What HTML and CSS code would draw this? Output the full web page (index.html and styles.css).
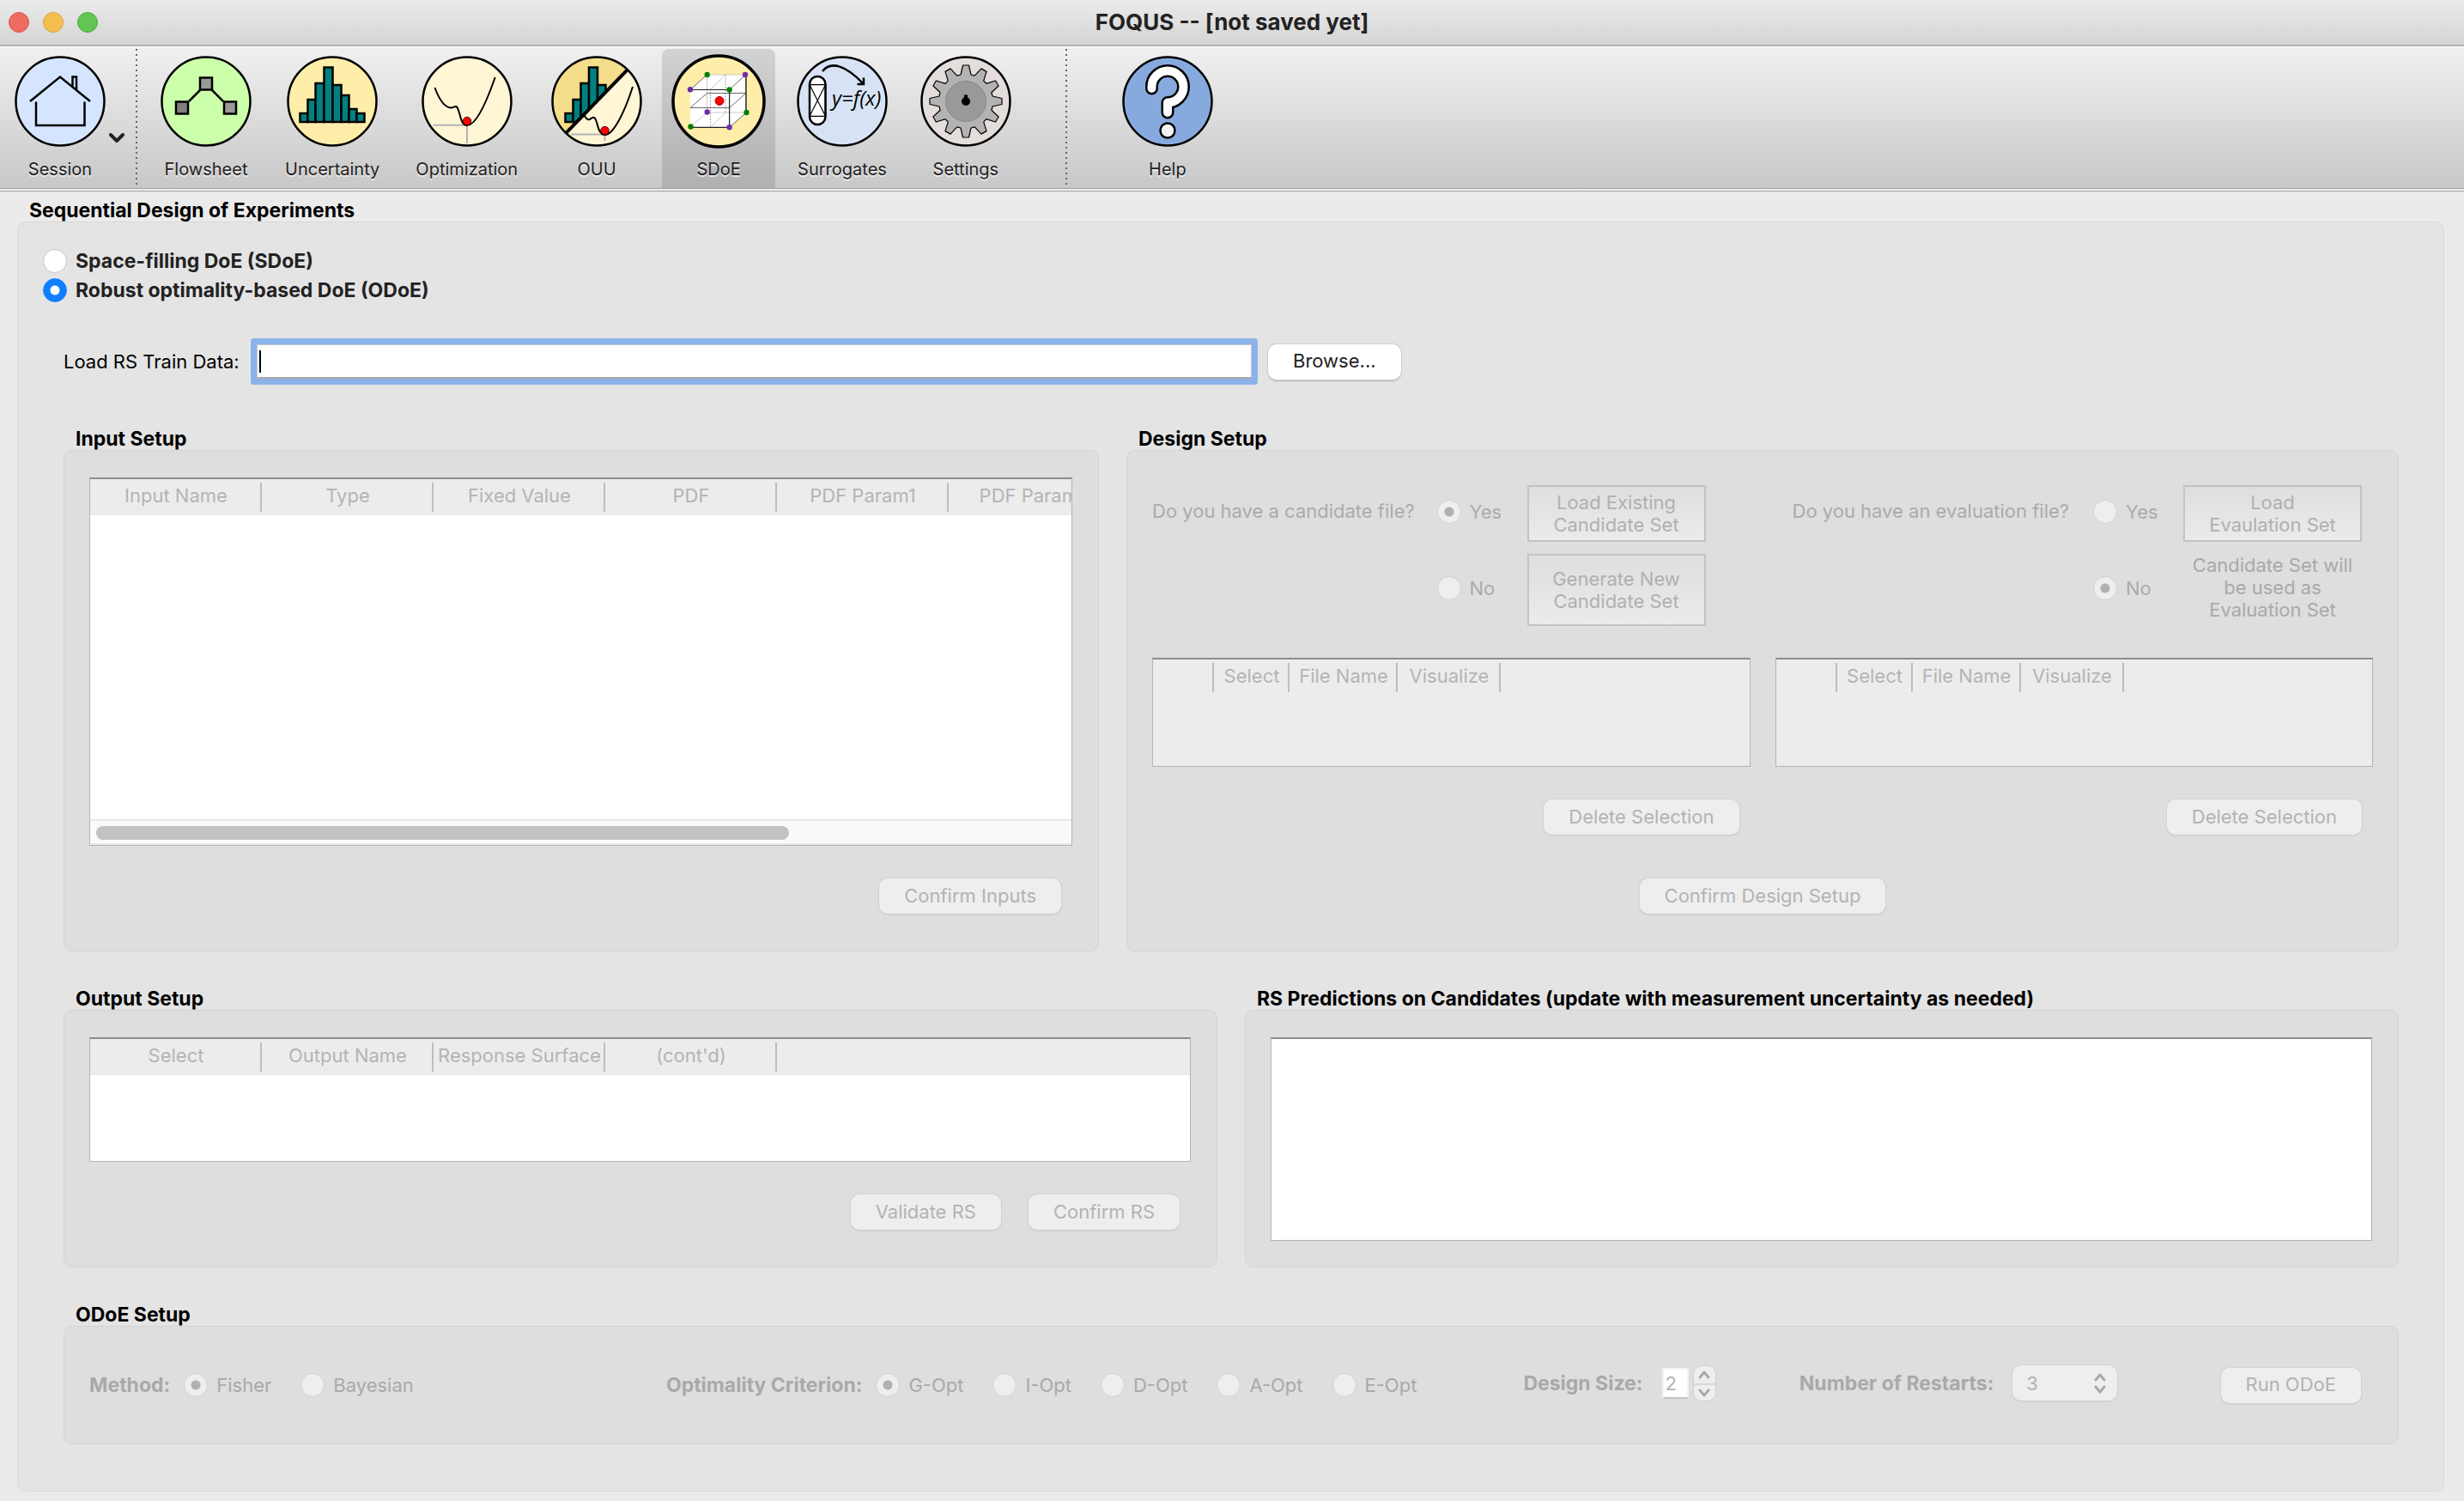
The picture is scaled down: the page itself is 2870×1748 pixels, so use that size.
FILE: index.html
```html
<!DOCTYPE html>
<html lang="en">
<head>
<meta charset="utf-8">
<title>FOQUS -- [not saved yet]</title>
<link rel="stylesheet" href="styles.css">
</head>
<body>
<header class="titlebar">
  <div class="lights">
    <button class="light close" aria-label="Close"></button>
    <button class="light minimize" aria-label="Minimize"></button>
    <button class="light zoom" aria-label="Zoom"></button>
  </div>
  <h1 class="window-title">FOQUS -- [not saved yet]</h1>
</header>

<nav class="toolbar">
  <button class="tool session">
    <svg class="tool-icon" viewBox="-2 -2 110 110">
      <circle class="disc" cx="53" cy="53" r="51.5" fill="#d5e5ff"/>
      <path class="ink" d="M67.5 36V24.500h4.500V40M18 53 53 24.500 88 53M25 53.500V81h56.500V53.500"/>
    </svg>
    <span>Session</span>
  </button>
  <svg class="chevron" viewBox="0 0 18 12"><path d="M2 2l7 7 7-7"/></svg>
  <i class="divider"></i>
  <button class="tool">
    <svg class="tool-icon" viewBox="-2 -2 110 110">
      <circle class="disc" cx="53" cy="53" r="51.5" fill="#ccffaa"/>
      <path class="ink" d="M46 40 33 53M60 40 73 53"/>
      <g class="ink"><rect x="46" y="25.500" width="14" height="14" fill="#999"/><rect x="18" y="53.500" width="14" height="14" fill="#808080"/><rect x="74" y="53.500" width="14" height="14" fill="#999"/></g>
    </svg>
    <span>Flowsheet</span>
  </button>
  <button class="tool">
    <svg class="tool-icon" viewBox="-2 -2 110 110">
      <circle class="disc" cx="53" cy="53" r="51.5" fill="#ffeeaa"/>
      <g class="ink bars"><rect x="15.500" y="67" width="9" height="10"/><rect x="24.500" y="51" width="9" height="26"/><rect x="33.500" y="32" width="10" height="45"/><rect x="43.500" y="13.500" width="10" height="63.500"/><rect x="53.500" y="34" width="10" height="43"/><rect x="63.500" y="46" width="9" height="31"/><rect x="72.500" y="62" width="9" height="15"/><rect x="81.500" y="67" width="9" height="10"/></g>
    </svg>
    <span>Uncertainty</span>
  </button>
  <button class="tool">
    <svg class="tool-icon" viewBox="-2 -2 110 110">
      <circle class="disc" cx="53" cy="53" r="51.5" fill="#fff6d5"/>
      <path class="axis" d="M13.500 80.700H53V102"/>
      <path class="ink thin" d="M15.400 37C21 52 28 60 34 60.500C38 61 40 56 42.500 62C46 71 46 81 53 81C64 81 77 50 85.700 25"/>
      <circle class="ball" cx="53" cy="76" r="4.700"/>
    </svg>
    <span>Optimization</span>
  </button>
  <button class="tool">
    <svg class="tool-icon" viewBox="-2 -2 110 110">
      <clipPath id="upper"><path d="M0 0H88L88.400 16.700 17.800 89.300H0z"/></clipPath>
      <clipPath id="round"><circle cx="53" cy="53" r="51.5"/></clipPath>
      <circle cx="53" cy="53" r="51.5" fill="#fff6d5"/>
      <path d="M-2-2H106.600L-2 109.600z" fill="#f4dd8b" clip-path="url(#round)"/>
      <g class="ink bars" clip-path="url(#upper)"><rect x="16.500" y="67" width="9" height="10"/><rect x="25.500" y="51" width="9" height="26"/><rect x="34.500" y="32" width="9.500" height="45"/><rect x="44" y="13.500" width="10" height="63.500"/><rect x="54" y="34" width="9.500" height="43"/></g>
      <path class="axis" d="M23 91.500H62.500V99"/>
      <path class="ink thin" d="M38.700 69.500C41 74 44 76 47 72.500C51 70 52 74 53.500 79C55 86 57 92 62.500 92C73 92 86 64 95 36"/>
      <path class="slash" d="M17.800 89.300 88.400 16.700"/>
      <circle class="ball" cx="62.500" cy="87" r="4.700"/>
      <circle class="disc" cx="53" cy="53" r="51.5" fill="none"/>
    </svg>
    <span>OUU</span>
  </button>
  <button class="tool active" aria-pressed="true">
    <svg class="tool-icon" viewBox="-2 -2 110 110">
      <circle class="disc heavy" cx="53" cy="53" r="53" fill="#ffeeaa"/>
      <path d="M20 39.500 39.500 22H84.500L85.500 66 65.600 83.300H20z" fill="#fff"/>
      <g class="wire">
        <path class="faint" d="M39.500 22V66H85.500M20 82.500 39.500 66M39.500 22H84.500"/>
        <path class="dash" d="M61 22V66L43.500 83.300V39.500z"/>
        <path d="M20 39.500 39.500 22M65.600 39.500 84.500 22 85 66M65.600 83.300 85.500 66"/>
        <path d="M20 60.500 39.500 43.500H85L65.600 60.500z"/>
        <path class="strong" d="M20 39.500H65.600V83.300H20M85 22V66"/>
      </g>
      <circle cx="54" cy="52.500" r="5" fill="#f00" stroke="#a00" stroke-width="1"/>
      <g fill="#008000"><circle cx="39.700" cy="22" r="3.200"/><circle cx="65.600" cy="39.500" r="3.200"/><circle cx="85.500" cy="66" r="3.200"/><circle cx="20.500" cy="82.500" r="3.200"/></g>
      <g fill="#6f2da8"><circle cx="84" cy="22" r="3.200"/><circle cx="20" cy="39.300" r="3.200"/><circle cx="39.700" cy="65.500" r="3.200"/><circle cx="65.600" cy="83.300" r="3.200"/></g>
    </svg>
    <span>SDoE</span>
  </button>
  <button class="tool">
    <svg class="tool-icon" viewBox="-2 -2 110 110">
      <circle class="disc" cx="53" cy="53" r="51.5" fill="#d7e3f4"/>
      <rect class="ink vessel" x="15" y="24" width="18.500" height="56" rx="9.200"/>
      <path class="ink hair" d="M15 33.700H33.500V70.300H15zL33.500 70.300M33.500 33.700 15 70.300"/>
      <path class="ink" d="M30 18C40 5 58 12 77 32M70.500 33H78V25.500"/>
      <text class="formula" x="41" y="57.500">y=f(x)</text>
    </svg>
    <span>Surrogates</span>
  </button>
  <button class="tool">
    <svg class="tool-icon" viewBox="-2 -2 110 110">
      <circle class="disc" cx="53" cy="53" r="51.5" fill="#e3dedb"/>
      <g transform="translate(53 53)">
        <circle r="31.600" fill="#b3b3b3"/>
        <g class="gear">
          <path id="tooth" d="M-6-31-3.500-42H3.500L6-31 10.300-29.900"/>
          <use href="#tooth" transform="rotate(30)"/><use href="#tooth" transform="rotate(60)"/><use href="#tooth" transform="rotate(90)"/><use href="#tooth" transform="rotate(120)"/><use href="#tooth" transform="rotate(150)"/><use href="#tooth" transform="rotate(180)"/><use href="#tooth" transform="rotate(210)"/><use href="#tooth" transform="rotate(240)"/><use href="#tooth" transform="rotate(270)"/><use href="#tooth" transform="rotate(300)"/><use href="#tooth" transform="rotate(330)"/>
        </g>
        <circle r="23.500" fill="#999" stroke="#888" stroke-width="1"/>
        <circle r="5"/><rect x="-2" y="-7.500" width="4" height="5"/>
      </g>
    </svg>
    <span>Settings</span>
  </button>
  <i class="divider after-tools"></i>
  <button class="tool help">
    <svg class="tool-icon" viewBox="-2 -2 110 110">
      <circle class="disc" cx="53" cy="53" r="51.5" fill="#87aade"/>
      <path class="mark-edge" d="M34.500 38V36A18.500 18.500 0 1 1 53 54.500V66"/>
      <path class="mark" d="M34.500 38V36A18.500 18.500 0 1 1 53 54.500V66"/>
      <circle class="ink dot" cx="53" cy="87" r="8.500"/>
    </svg>
    <span>Help</span>
  </button>
</nav>

<main>
  <h2 class="group-title">Sequential Design of Experiments</h2>
  <div class="panel outer">
    <div class="mode">
      <label><input type="radio" name="mode">Space-filling DoE (SDoE)</label>
      <label><input type="radio" name="mode" checked>Robust optimality-based DoE (ODoE)</label>
    </div>

    <div class="load-row">
      <label for="train">Load RS Train Data:</label>
      <input id="train" class="path-field" type="text">
      <button class="btn">Browse...</button>
    </div>

    <div class="row top-row">
      <section class="group">
        <h2 class="group-title">Input Setup</h2>
        <div class="panel padded">
          <div class="frame input-frame">
            <table class="grid-table">
              <thead><tr><th>Input Name</th><th>Type</th><th>Fixed Value</th><th>PDF</th><th>PDF Param1</th><th>PDF Param2</th></tr></thead>
            </table>
            <div class="scrollbar"><div class="thumb"></div></div>
          </div>
          <div class="actions"><button class="btn" disabled>Confirm Inputs</button></div>
        </div>
      </section>

      <section class="group">
        <h2 class="group-title">Design Setup</h2>
        <div class="panel design">
          <div class="halves">
            <div class="half">
              <div class="choices candidate">
                <span class="question">Do you have a candidate file?</span>
                <label><input type="radio" name="cand" checked disabled>Yes</label>
                <button class="flat" disabled>Load Existing<br>Candidate Set</button>
                <label class="second"><input type="radio" name="cand" disabled>No</label>
                <button class="flat" disabled>Generate New<br>Candidate Set</button>
              </div>
              <div class="frame file-frame">
                <table class="file-table"><thead><tr><th></th><th>Select</th><th>File Name</th><th>Visualize</th></tr></thead></table>
              </div>
              <div class="actions"><button class="btn" disabled>Delete Selection</button></div>
            </div>
            <div class="half">
              <div class="choices evaluation">
                <span class="question">Do you have an evaluation file?</span>
                <label><input type="radio" name="eval" disabled>Yes</label>
                <button class="flat" disabled>Load<br>Evaulation Set</button>
                <label class="second"><input type="radio" name="eval" checked disabled>No</label>
                <p class="note">Candidate Set will<br>be used as<br>Evaluation Set</p>
              </div>
              <div class="frame file-frame">
                <table class="file-table"><thead><tr><th></th><th>Select</th><th>File Name</th><th>Visualize</th></tr></thead></table>
              </div>
              <div class="actions"><button class="btn" disabled>Delete Selection</button></div>
            </div>
          </div>
          <div class="confirm"><button class="btn" disabled>Confirm Design Setup</button></div>
        </div>
      </section>
    </div>

    <div class="row bottom-row">
      <section class="group">
        <h2 class="group-title">Output Setup</h2>
        <div class="panel padded">
          <div class="frame output-frame">
            <table class="grid-table">
              <thead><tr><th>Select</th><th>Output Name</th><th>Response Surface</th><th>(cont'd)</th></tr></thead>
            </table>
          </div>
          <div class="actions"><button class="btn" disabled>Validate RS</button><button class="btn" disabled>Confirm RS</button></div>
        </div>
      </section>
      <section class="group">
        <h2 class="group-title">RS Predictions on Candidates (update with measurement uncertainty as needed)</h2>
        <div class="panel padded predictions"><div class="frame"></div></div>
      </section>
    </div>

    <section class="group">
      <h2 class="group-title">ODoE Setup</h2>
      <div class="panel odoe">
        <div class="field">
          <strong>Method:</strong>
          <label><input type="radio" name="method" checked disabled>Fisher</label>
          <label><input type="radio" name="method" disabled>Bayesian</label>
        </div>
        <div class="field">
          <strong>Optimality Criterion:</strong>
          <label><input type="radio" name="opt" checked disabled>G-Opt</label>
          <label><input type="radio" name="opt" disabled>I-Opt</label>
          <label><input type="radio" name="opt" disabled>D-Opt</label>
          <label><input type="radio" name="opt" disabled>A-Opt</label>
          <label><input type="radio" name="opt" disabled>E-Opt</label>
        </div>
        <div class="field control">
          <label class="strong" for="size">Design Size:</label>
          <div class="spin">
            <input id="size" type="number" value="2" disabled>
            <div class="stepper">
              <button disabled aria-label="Increase"><svg viewBox="0 0 16 10"><path d="M3 8l5-6 5 6"/></svg></button>
              <button disabled aria-label="Decrease"><svg viewBox="0 0 16 10"><path d="M3 2l5 6 5-6"/></svg></button>
            </div>
          </div>
        </div>
        <div class="field control">
          <label class="strong" for="restarts">Number of Restarts:</label>
          <div class="picker">
            <select id="restarts" disabled><option>3</option></select>
            <svg viewBox="0 0 16 26"><path d="M3 9l5-6 5 6M3 17l5 6 5-6"/></svg>
          </div>
        </div>
        <button class="btn run" disabled>Run ODoE</button>
      </div>
    </section>
  </div>
</main>
</body>
</html>
```
FILE: styles.css
```css
* { box-sizing: border-box; }

body {
  margin: 0;
  min-height: 100vh;
  display: flex;
  flex-direction: column;
  background: #ebebeb;
  color: #000;
  font: 22px/26px Inter, "Liberation Sans", sans-serif;
}

button, input, select { font: inherit; color: inherit; margin: 0; }
h1, h2, p { margin: 0; }

/* window title bar */
.titlebar {
  display: grid;
  grid-template-columns: 1fr auto 1fr;
  align-items: center;
  height: 54px;
  background: linear-gradient(#ebebeb, #d4d4d4);
  border-bottom: 2px solid #b1b1b1;
}
.lights { display: flex; gap: 16px; padding-left: 10px; }
.light { width: 24px; height: 24px; padding: 0; border-radius: 50%; border: 1px solid; }
.close { background: #ed6b5f; border-color: #d55a4f; }
.minimize { background: #f5bf4f; border-color: #d9a342; }
.zoom { background: #62c554; border-color: #52a842; }
.window-title { font-size: 26px; line-height: 30px; font-weight: 700; color: #222; }

/* toolbar */
.toolbar {
  display: flex;
  align-items: stretch;
  gap: 10px;
  height: 169px;
  padding: 2px 4px 0;
  background: linear-gradient(#f0f0f0, #c8c8c8);
  border-top: 1px solid #fff;
  border-bottom: 4px double #a0a0a0;
}
.tool {
  display: flex;
  flex-direction: column;
  align-items: center;
  gap: 12px;
  min-width: 132px;
  padding: 6px 11px 0;
  border: 0;
  background: none;
  color: #222;
  font-size: 20px;
  line-height: 24px;
  text-shadow: 0 2px 1px #eee;
}
.tool span { padding: 0 5px; }
.tool.active { background: linear-gradient(#d2d2d2, #b0b0b0); border-radius: 8px 8px 0 0; }
.tool-icon { width: 110px; height: 110px; flex: none; overflow: visible; }
.chevron { width: 18px; height: 12px; margin: 98px 0 0 -19px; fill: none; stroke: #222; stroke-width: 4; stroke-linecap: round; stroke-linejoin: round; }
.divider { width: 2px; margin: 0 4px 4px 3px; background: repeating-linear-gradient(#666 0 2px, transparent 2px 6px); }
.divider.after-tools { margin: 0 41px 4px 40px; }

.disc { stroke: #000; stroke-width: 2.5; }
.disc.heavy { stroke-width: 3.5; }
.ink { fill: none; stroke: #000; stroke-width: 2.5; }
.ink.thin { stroke-width: 2; }
.ink.hair { stroke-width: 1.2; }
.ink.bars { fill: #008080; }
.ink.vessel { fill: #fff; }
.ink.dot { fill: #f2f2f2; }
.axis { fill: none; stroke: #b3b3b3; stroke-width: 2; }
.ball { fill: #f00; stroke: #500; stroke-width: 1; }
.slash { stroke: #000; stroke-width: 4; }
.wire { fill: none; stroke: #444; stroke-width: 0.8; }
.wire .faint { stroke: #bbb; }
.wire .dash { stroke: #888; stroke-dasharray: 2 1.5; }
.wire .strong { stroke: #222; stroke-width: 1.2; }
.formula { font: italic 24px "Open Sans", sans-serif; fill: #000; text-shadow: none; }
.gear { fill: #b3b3b3; stroke: #000; stroke-width: 1.2; stroke-linejoin: round; }
.mark, .mark-edge { fill: none; stroke-linecap: round; stroke-linejoin: round; }
.mark { stroke: #fff; stroke-width: 10; }
.mark-edge { stroke: #000; stroke-width: 15; }

/* group boxes */
main { flex: 1; display: flex; flex-direction: column; padding: 9px 23px 11px 20px; }
.group-title { padding-left: 14px; font-size: 23px; line-height: 26px; font-weight: 700; }
.group { display: flex; flex-direction: column; min-width: 0; }
.panel { flex: 1; background: #dedede; border: 1px solid #d4d4d4; border-radius: 10px; }
.outer { padding: 28px 52px 54px 53px; background: #e4e4e4; border-color: #d9d9d9; }
.padded { display: flex; flex-direction: column; padding: 31px 30px 43px 29px; color: #b0b0b0; }
.row { display: grid; column-gap: 32px; margin-bottom: 42px; }
.top-row { grid-template-columns: 1206fr 1482fr; }
.bottom-row { grid-template-columns: 1fr 1fr; }

.mode { display: flex; flex-direction: column; margin-left: -24px; font-size: 23px; font-weight: 700; color: #222; }
.mode label { height: 34px; }
label { display: flex; align-items: center; gap: 10px; white-space: nowrap; }

input[type="radio"] {
  appearance: none;
  width: 28px;
  height: 28px;
  flex: none;
  border: 1px solid #c6c6c6;
  border-radius: 50%;
  background: #fff;
}
input[type="radio"]:checked { border-color: #1a84ff; background: radial-gradient(circle, #fff 0 5px, #0f7fff 6px); }
input[type="radio"]:disabled { border-color: #d2d2d2; background: #eee; }
input[type="radio"]:disabled:checked { background: radial-gradient(circle, #b0b0b0 0 5px, #eee 6px); }

.load-row { display: flex; align-items: center; min-height: 54px; margin: 39px 0 50px; }
.load-row label { width: 225px; }
.path-field {
  width: 1159px;
  height: 40px;
  margin-right: 19px;
  border: 1px solid #c4c9cf;
  border-bottom: 2px solid #aaa;
  background: linear-gradient(#000, #000) 2px center / 2px 26px no-repeat #fff;
  box-shadow: 0 0 0 7px #8cb2ea;
  border-radius: 1px;
  outline: none;
}

.btn {
  height: 41px;
  padding: 0 29px 2px;
  border: 0;
  border-radius: 10px;
  background: #fff;
  color: #222;
  box-shadow: 0 0 1px 1px #cfcfcf, 0 2px 2px #b0b0b0;
}
.btn:disabled { background: #eee; color: #b3b3b3; box-shadow: 0 0 1px 1px #d3d3d3, 0 1px 2px #bbb; }
.actions { display: flex; justify-content: flex-end; gap: 32px; margin-top: 38px; padding-right: 13px; }

/* tables */
.frame { border: 1px solid #b4b4b4; border-top: 2px solid #8c8c8c; background: #fff; overflow: hidden; }
.input-frame { flex: 1; min-height: 428px; display: flex; flex-direction: column; background: linear-gradient(#ececec 42px, #fff 42px); }
.output-frame { min-height: 145px; background: linear-gradient(#ececec 42px, #fff 42px); }
.predictions { padding-bottom: 30px; }
.predictions .frame { flex: 1; }
table { border-collapse: collapse; table-layout: fixed; }
th {
  height: 42px;
  padding: 0 0 4px;
  font-weight: 400;
  color: #b4b4b4;
  white-space: nowrap;
  background: linear-gradient(#bebebe, #bebebe) right center / 2px 34px no-repeat;
}
.grid-table { width: 0; }
.grid-table th { width: 200px; }
.scrollbar { margin-top: auto; height: 30px; padding: 6px 0 6px 7px; border-top: 2px solid #e8e8e8; border-bottom: 2px solid #e8e8e8; background: #fafafa; }
.thumb { width: 71%; height: 16px; border-radius: 8px; background: #c2c2c2; }

/* design setup */
.design { padding: 40px 29px 43px; color: #ababab; }
.halves { display: grid; grid-template-columns: 1fr 1fr; column-gap: 29px; }
.half { min-width: 0; }
.choices { display: grid; grid-template-columns: 1fr 105px 208px; grid-template-rows: 66px 84px; row-gap: 14px; align-items: center; margin-bottom: 37px; }
.choices .second { grid-column: 2; }
.choices label { padding-bottom: 5px; }
.question, .note { padding-bottom: 7px; white-space: nowrap; }
.candidate { padding-right: 52px; }
.evaluation { padding: 0 13px 0 20px; }
.flat { height: 100%; padding: 0; border: 2px solid #c3c3c3; background: linear-gradient(#dedede, #ebebeb); color: #b0b0b0; }
.note { text-align: center; color: #a9a9a9; }
.file-frame { height: 127px; background: #ececec; }
.file-table { width: 405px; }
.file-table th:nth-child(1) { width: 71px; }
.file-table th:nth-child(2) { width: 88px; }
.file-table th:nth-child(3) { width: 126px; }
.file-table th:nth-child(4) { width: 120px; }
.confirm { display: flex; justify-content: center; margin-top: 51px; }

/* ODoE setup */
.odoe {
  display: grid;
  grid-template-columns: 671fr 997fr 321fr 490fr auto;
  align-items: center;
  min-height: 138px;
  padding: 0 43px 0 29px;
  color: #a9a9a9;
}
.field { display: flex; align-items: center; gap: 16px; min-width: 0; white-space: nowrap; }
.field label + label { margin-left: 18px; }
.field.control { gap: 22px; padding-bottom: 5px; }
.field label.strong, .field strong { font-size: 23px; font-weight: 700; }
.spin { display: flex; align-items: center; gap: 5px; }
.spin input { width: 31px; height: 36px; padding: 0 2px; border: 2px solid #f2f2f2; border-bottom-color: #c4c4c4; background: #fff; color: #b3b3b3; appearance: textfield; }
.spin input::-webkit-inner-spin-button { display: none; }
.stepper { width: 27px; border-radius: 10px; overflow: hidden; background: #eee; border: 1px solid #d0d0d0; }
.stepper button { display: flex; align-items: center; justify-content: center; width: 25px; height: 20px; padding: 0; border: 0; background: none; }
.stepper button + button { border-top: 2px solid #d8d8d8; }
.stepper svg { width: 16px; height: 10px; }
.stepper svg, .picker svg { fill: none; stroke: #a9a9a9; stroke-width: 3; stroke-linecap: round; stroke-linejoin: round; }
.picker { position: relative; }
.picker select { width: 122px; height: 41px; padding: 0 16px; border: 0; border-radius: 10px; appearance: none; background: #eee; color: #b0b0b0; opacity: 1; box-shadow: 0 0 1px 1px #d3d3d3, 0 1px 2px #bbb; }
.picker svg { position: absolute; right: 12px; top: 8px; width: 16px; height: 26px; pointer-events: none; }
```
